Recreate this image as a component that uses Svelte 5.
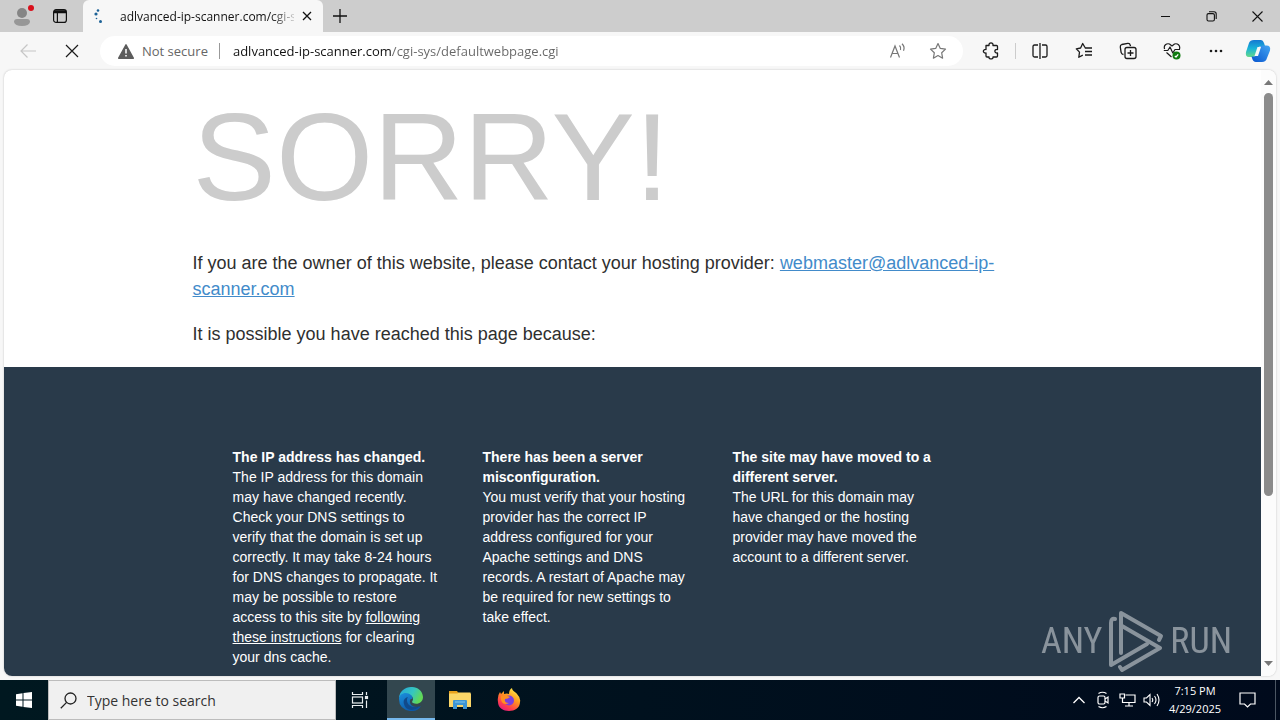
<script lang="ts">
	interface Reason {
		title: string;
		text: string;
		link?: string;
		after?: string;
	}

	const reasons: Reason[] = [
		{
			title: 'The IP address has changed.',
			text: 'The IP address for this domain may have changed recently. Check your DNS settings to verify that the domain is set up correctly. It may take 8-24 hours for DNS changes to propagate. It may be possible to restore access to this site by ',
			link: 'following these instructions',
			after: ' for clearing your dns cache.'
		},
		{
			title: 'There has been a server misconfiguration.',
			text: 'You must verify that your hosting provider has the correct IP address configured for your Apache settings and DNS records. A restart of Apache may be required for new settings to take effect.'
		},
		{
			title: 'The site may have moved to a different server.',
			text: 'The URL for this domain may have changed or the hosting provider may have moved the account to a different server.'
		}
	];

	let url = $state('adlvanced-ip-scanner.com/cgi-sys/defaultwebpage.cgi');
	let search = $state('');
</script>

<div class="screen">
	<header class="titlebar">
		<button class="profile" aria-label="Profile">
			<svg width="24" height="26" viewBox="0 0 24 26">
				<circle cx="12" cy="10" r="5" fill="#858585" />
				<path d="M4 19q0-3 3-3h10q3 0 3 3-1 4-8 4t-8-4z" fill="#979797" />
				<circle cx="21" cy="5" r="3" fill="#d9101c" />
			</svg>
		</button>
		<button class="spaces" aria-label="Tab actions">
			<svg width="16" height="16" viewBox="0 0 16 16" fill="none" stroke="#111" stroke-width="1.2">
				<rect x="1.6" y="1.6" width="12.8" height="12.8" rx="2.5" />
				<path d="M2 4.6h12M5.4 4.6V14" />
				<path d="M2 3.2h12" stroke-width="2" />
			</svg>
		</button>
		<div class="tab">
			<svg class="spinner" width="16" height="16" viewBox="0 0 16 16" fill="#1d6296">
				<circle cx="7" cy="2.500" r="1.300" />
				<circle cx="5" cy="6" r="1.600" />
				<circle cx="5.500" cy="10.500" r=".8" />
				<circle cx="9.500" cy="13.500" r="1.500" />
			</svg>
			<span class="tab-title">adlvanced-ip-scanner.com/cgi-s</span>
			<button class="tab-close" aria-label="Close tab">
				<svg width="10" height="10" viewBox="0 0 10 10" stroke="#111" stroke-width="1.3"><path d="M1 1l8 8M9 1l-8 8" /></svg>
			</button>
		</div>
		<button class="new-tab" aria-label="New tab">
			<svg width="14" height="14" viewBox="0 0 14 14" stroke="#111" stroke-width="1.3"><path d="M7 0v14M0 7h14" /></svg>
		</button>
		<div class="window-buttons">
			<button aria-label="Minimize">
				<svg width="11" height="11" viewBox="0 0 11 11" stroke="#111"><path d="M1 5.5h9" /></svg>
			</button>
			<button aria-label="Restore">
				<svg width="11" height="11" viewBox="0 0 11 11" fill="none" stroke="#111" stroke-width="1.1">
					<rect x="1" y="2.6" width="7.4" height="7.4" rx="1.5" />
					<path d="M3 .8h5q2.200 0 2.200 2.200v5" />
				</svg>
			</button>
			<button aria-label="Close">
				<svg width="11" height="11" viewBox="0 0 11 11" stroke="#111" stroke-width="1.1"><path d="M.5.5l10 10M10.5.5l-10 10" /></svg>
			</button>
		</div>
	</header>

	<nav class="toolbar">
		<button aria-label="Back" disabled>
			<svg width="18" height="16" viewBox="0 0 18 16" fill="none" stroke="#c6c6c6" stroke-width="1.2"><path d="M17 8H2M8.500 1.500L2 8l6.500 6.500" /></svg>
		</button>
		<button aria-label="Stop">
			<svg width="14" height="14" viewBox="0 0 14 14" stroke="#1b1b1b" stroke-width="1.2"><path d="M1 1l12 12M13 1L1 13" /></svg>
		</button>
		<div class="address">
			<button class="security">
				<svg width="16" height="15" viewBox="0 0 16 15">
					<path d="M8 .8l7.300 13.400H.7z" fill="#5c5c5c" stroke="#5c5c5c" stroke-width="1.400" stroke-linejoin="round" />
					<path d="M8 5v4.500M8 11v1.600" stroke="#fff" stroke-width="1.500" />
				</svg>
				Not secure
			</button>
			<input type="text" aria-label="Address" bind:value={url} spellcheck="false" />
			<button class="in-address" aria-label="Read aloud">
				<svg width="18" height="16" viewBox="0 0 18 16" fill="none" stroke="#777" stroke-width="1.2">
					<path d="M1.500 14.500L6 3l4.500 11.500M3 10.500h6M10.500 2.500q1.800 1.800 1 4.500M13 .8q3.200 3 1.500 7" />
				</svg>
			</button>
			<button class="in-address" aria-label="Add to favorites">
				<svg width="18" height="18" viewBox="0 0 18 18" fill="none" stroke="#777" stroke-width="1.2" stroke-linejoin="round">
					<path d="M9 1.500l2.300 4.900 5.200.7-3.800 3.700.9 5.400L9 13.600l-4.600 2.600.9-5.400L1.500 7.100l5.200-.7z" />
				</svg>
			</button>
		</div>
		<button aria-label="Extensions">
			<svg width="18" height="18" viewBox="0 0 18 18" fill="none" stroke="#1b1b1b" stroke-width="1.3" stroke-linejoin="round">
				<path d="M4 3.500h3C6.500 0 11.500 0 11 3.500h3.500q1 0 1 1v3c-3.500-.6-3.500 4 0 3.500v3q0 1-1 1H11c.5 2.600-4.500 2.600-4 0H5q-1 0-1-1V11C.5 11.500.5 7 4 7.500z" />
			</svg>
		</button>
		<span class="divider"></span>
		<button aria-label="Split screen">
			<svg width="18" height="16" viewBox="0 0 18 16" fill="none" stroke="#1b1b1b" stroke-width="1.3">
				<path d="M7 2H3.500Q2 2 2 3.500v9Q2 14 3.500 14H7M11 2h3.500Q16 2 16 3.500v9q0 1.500-1.500 1.500H11M9 0v16" />
			</svg>
		</button>
		<button aria-label="Favorites">
			<svg width="18" height="18" viewBox="0 0 18 18" fill="none" stroke="#1b1b1b" stroke-width="1.3" stroke-linejoin="round">
				<path d="M10 5.500L7.700 1.500 5.600 6 1.300 6.800l3.200 3.300-.7 5.200 4-2.200M9.800 6H17M10 9.500h7M10 13h7" />
			</svg>
		</button>
		<button aria-label="Collections">
			<svg width="18" height="18" viewBox="0 0 18 18" fill="none" stroke="#1b1b1b" stroke-width="1.3">
				<path d="M4.500 12.500q-2-.3-2.400-2.200L1.300 5q-.2-2 1.500-2.500l6-1.200q2-.2 2.400 1.700l.3 1.200" />
				<rect x="6" y="5.500" width="11" height="11" rx="2" />
				<path d="M11.500 8v6M8.500 11h6" />
			</svg>
		</button>
		<button aria-label="Browser essentials">
			<svg width="18" height="18" viewBox="0 0 18 18" fill="none" stroke="#1b1b1b" stroke-width="1.2" stroke-linejoin="round">
				<path d="M1.600 7C.3 3.500 3.500 1 6.500 2L9 4l2.500-2c3-1 6 1.500 5 5M3.500 10.500L8.500 15" />
				<path d="M.8 8.500h4L7 5l2.800 6L12 7.500h5" />
				<circle cx="13.500" cy="13.500" r="4" fill="#107c10" stroke="none" />
				<path d="M11.800 14l1.200 1 2.200-2.700" stroke="#fff" />
			</svg>
		</button>
		<button aria-label="Settings and more">
			<svg width="16" height="4" viewBox="0 0 16 4" fill="#1b1b1b"><circle cx="3" cy="2" r="1.300" /><circle cx="8" cy="2" r="1.300" /><circle cx="13" cy="2" r="1.300" /></svg>
		</button>
		<button class="copilot" aria-label="Copilot">
			<svg width="26" height="24" viewBox="0 0 26 24">
				<defs>
					<linearGradient id="cop-a" x1="0" y1="0" x2="0" y2="1">
						<stop offset="0" stop-color="#1478d2" /><stop offset=".5" stop-color="#19b3d8" /><stop offset="1" stop-color="#65d989" />
					</linearGradient>
					<linearGradient id="cop-b" x1="1" y1="0" x2="0" y2="1">
						<stop offset="0" stop-color="#43a5f2" /><stop offset="1" stop-color="#0754ce" />
					</linearGradient>
				</defs>
				<path d="M9 1h7q2 0 3 3l1 3h-4q-2 0-3 3l-1.500 5q-1 3-4 3H4q-4 0-3-5L4 4q1-3 5-3z" fill="url(#cop-a)" />
				<path d="M17 23h-6q-3 0-4-4l-.5-1.500H9q2 0 3-3l2-5q1-3 4-3h3.500q4.500 0 3.500 5L22 19q-1 4-5 4z" fill="url(#cop-b)" />
				<path d="M12.500 8h3.500l-3 9H9.500z" fill="#f7f7f7" />
			</svg>
		</button>
	</nav>

	<div class="viewport">
		<main class="page">
			<section class="intro">
				<h1>SORRY!</h1>
				<p>If you are the owner of this website, please contact your hosting provider: <a href="mailto:webmaster@adlvanced-ip-scanner.com">webmaster@adlvanced-ip-scanner.com</a></p>
				<p>It is possible you have reached this page because:</p>
			</section>
			<section class="reasons">
				<ul>
					{#each reasons as reason}
						<li>
							<strong>{reason.title}</strong><br />
							{reason.text}{#if reason.link}<a href="#dns">{reason.link}</a>{reason.after}{/if}
						</li>
					{/each}
				</ul>
			</section>
		</main>
		<div class="scrollbar">
			<svg width="9" height="6" viewBox="0 0 9 6" fill="#777"><path d="M4.500 0L9 5H0z" /></svg>
			<div class="track"><div class="thumb"></div></div>
			<svg width="9" height="6" viewBox="0 0 9 6" fill="#777"><path d="M4.500 6L9 1H0z" /></svg>
		</div>
	</div>

	<div class="watermark">
		<span>ANY</span>
		<svg width="56" height="62" viewBox="0 0 56 62" fill="none" stroke="#fff" stroke-width="4" stroke-linejoin="round" stroke-linecap="round">
			<path d="M13 43V3l40 23-2 4" />
			<path d="M7 9q-4-1-4 4v42l36-21" />
			<path d="M14 16l38 22-38 22-2-3" />
		</svg>
		<span>RUN</span>
	</div>

	<footer class="taskbar">
		<button class="start" aria-label="Start">
			<svg width="16" height="16" viewBox="0 0 16 16" fill="#fff"><path d="M0 2.200L6.500 1.300v6.200H0zM7.500 1.100L16 0v7.500H7.500zM0 8.500h6.500v6.200L0 13.800zM7.500 8.500H16V16l-8.500-1.100z" /></svg>
		</button>
		<label class="search">
			<svg width="17" height="17" viewBox="0 0 17 17" fill="none" stroke="#222" stroke-width="1.300"><circle cx="10.500" cy="6.500" r="5.500" /><path d="M6.600 10.400L.8 16.200" /></svg>
			<input type="text" placeholder="Type here to search" aria-label="Search" bind:value={search} />
		</label>
		<button class="task" aria-label="Task View">
			<svg width="18" height="16" viewBox="0 0 18 16" fill="none" stroke="#e8eef0" stroke-width="1.200">
				<path d="M1.500 0v2.500h10V0M1.500 16v-2.500h10V16M15.500 0v3M15.500 8.500V16" />
				<rect x="1.500" y="5" width="10" height="6" />
				<rect x="14.500" y="4.500" width="2" height="2" fill="#e8eef0" />
			</svg>
		</button>
		<button class="task open" aria-label="Microsoft Edge">
			<svg width="24" height="24" viewBox="0 0 24 24">
				<defs>
					<linearGradient id="edge-a" x1="0" y1="0" x2="1" y2=".4"><stop offset="0" stop-color="#25a4dc" /><stop offset=".6" stop-color="#35c6c0" /><stop offset="1" stop-color="#61d957" /></linearGradient>
					<linearGradient id="edge-b" x1="0" y1="0" x2=".6" y2="1"><stop offset="0" stop-color="#1b90de" /><stop offset="1" stop-color="#0c56a4" /></linearGradient>
				</defs>
				<path d="M0 11C1-3 23-4 24 10c0 6-6 8-10 6-2-1 0-2 0-4C14 7 4 5 0 11z" fill="url(#edge-a)" />
				<path d="M0 12c0-6 8-8 12-4 2 2 2 4 0 4-2 1-2 8 6 8q3 0 4-1-4 6-11 5Q0 22 0 12z" fill="url(#edge-b)" />
				<path d="M8 13c0 5 5 9 13 6-4 5-14 6-16-2-1-3 0-6 4-7q-1 1-1 3z" fill="#114a8b" />
			</svg>
		</button>
		<button class="task" aria-label="File Explorer">
			<svg width="22" height="20" viewBox="0 0 22 20">
				<path d="M0 1h8l2 3H0z" fill="#e9a21d" />
				<path d="M0 3.500h22V17H0z" fill="#fbd668" />
				<path d="M9 2.500h12.500V6H8z" fill="#fbd668" />
				<path d="M4 11q0-1 1-1h12q1 0 1 1v8h-4v-4H8v4H4z" fill="#3d95d4" />
				<path d="M6 12h10" stroke="#80c6ec" />
			</svg>
		</button>
		<button class="task" aria-label="Firefox">
			<svg width="24" height="24" viewBox="0 0 24 24">
				<defs>
					<linearGradient id="fox" x1=".8" y1="0" x2=".2" y2="1"><stop offset="0" stop-color="#fff44f" /><stop offset=".4" stop-color="#ff9a1f" /><stop offset=".75" stop-color="#ff3f4b" /><stop offset="1" stop-color="#e31587" /></linearGradient>
				</defs>
				<path d="M3 4l1 2 3-3v3q3-1 5 0c0-3 1-5 3-6 0 3 4 4 5 6q4 4 3 8c0 12-22 12-22 0Q0 8 3 4z" fill="url(#fox)" />
				<circle cx="12" cy="12.500" r="5" fill="#7a3fe0" />
				<path d="M4 8q4-2 9 1-2 2-5 2-1 4 4 4c-5 3-9-1-8-7z" fill="#ff9020" />
			</svg>
		</button>

		<div class="tray">
			<button aria-label="Show hidden icons">
				<svg width="12" height="8" viewBox="0 0 12 8" fill="none" stroke="#fff" stroke-width="1.300"><path d="M.5 7L6 1.500 11.500 7" /></svg>
			</button>
			<button aria-label="Meet now">
				<svg width="14" height="18" viewBox="0 0 14 18" fill="none" stroke="#fff" stroke-width="1.200">
					<rect x="2" y="5" width="7" height="8" rx="1.500" /><path d="M9 8l3-2v6l-3-2M2.500 2.500q4-2.500 8 0M2.500 15.500q4 2.500 8 0" />
				</svg>
			</button>
			<button aria-label="Network">
				<svg width="17" height="14" viewBox="0 0 17 14" fill="none" stroke="#fff" stroke-width="1.200">
					<path d="M6.500 2H16v7.500H3.500V6M10 9.500V13M6 13h8M1 1h4.500v4H1zM3.500 5v5" />
				</svg>
			</button>
			<button aria-label="Volume">
				<svg width="17" height="14" viewBox="0 0 17 14" fill="none" stroke="#fff" stroke-width="1.100">
					<path d="M1 5h2.500L7 1.500v11L3.500 9H1zM9 5q1.500 2 0 4M11.500 3q3 4 0 8M14 1q4 6 0 12" />
				</svg>
			</button>
			<button class="clock"><span>7:15 PM</span><span>4/29/2025</span></button>
			<button class="notifications" aria-label="Notifications">
				<svg width="17" height="16" viewBox="0 0 17 16" fill="none" stroke="#fff" stroke-width="1.200"><path d="M1 1h15v11h-4.500l-3 3-3-3H1z" /></svg>
			</button>
			<span class="desktop-edge"></span>
		</div>
	</footer>
</div>

<style>
	:global(body) {
		margin: 0;
	}

	.screen {
		position: relative;
		display: flex;
		flex-direction: column;
		height: 100vh;
		overflow: hidden;
		background: #f7f7f7;
		font-family: 'Open Sans', 'Noto Sans', sans-serif;
		font-size: 13px;
		color: #111;
	}

	button {
		display: flex;
		align-items: center;
		justify-content: center;
		padding: 0;
		border: 0;
		background: none;
		color: inherit;
		font: inherit;
	}

	svg {
		flex: none;
	}

	input {
		min-width: 0;
		padding: 0;
		border: 0;
		outline: 0;
		background: none;
		font: inherit;
	}

	.titlebar {
		display: flex;
		flex: none;
		height: 32px;
		background: #cdcdcd;
	}

	.profile {
		width: 44px;
	}

	.spaces {
		width: 32px;
	}

	.tab {
		display: flex;
		align-items: center;
		box-sizing: border-box;
		width: 240px;
		margin-left: 7px;
		padding: 0 9px 0 8px;
		border-radius: 6px 6px 0 0;
		background: #f7f7f7;
	}

	.tab-title {
		flex: 1;
		margin-left: 13px;
		overflow: hidden;
		font-size: 12px;
		white-space: nowrap;
		mask-image: linear-gradient(to right, #000 150px, transparent 180px);
	}

	.tab-close {
		width: 14px;
		height: 20px;
		margin-left: 6px;
	}

	.new-tab {
		width: 34px;
	}

	.window-buttons {
		display: flex;
		margin-left: auto;
	}

	.window-buttons button {
		width: 46px;
	}

	.toolbar {
		display: flex;
		flex: none;
		align-items: center;
		height: 38px;
		padding: 0 2px 0 6px;
	}

	.toolbar > button {
		width: 44px;
		height: 32px;
	}

	.toolbar > .copilot {
		width: 40px;
	}

	.address {
		display: flex;
		flex: 1;
		align-items: center;
		height: 30px;
		margin: 0 6px;
		padding: 0 5px 0 18px;
		border-radius: 16px;
		background: #fff;
	}

	.security {
		gap: 8px;
		padding-right: 11px;
		border-right: 1px solid #999;
		color: #666;
		line-height: 16px;
	}

	.address input {
		flex: 1;
		margin-left: 13px;
		background: linear-gradient(to right, #111 159px, #666 159px);
		background-clip: text;
		-webkit-text-fill-color: transparent;
	}

	.in-address {
		width: 40px;
	}

	.divider {
		width: 1px;
		height: 16px;
		margin: 0 2px;
		background: #ccc;
	}

	.viewport {
		display: flex;
		flex: 1;
		min-height: 0;
		margin: 0 4px 4px;
		overflow: hidden;
		border-radius: 8px;
		background: #fff;
		box-shadow: 0 0 2px #bbb;
	}

	.page {
		display: flex;
		flex: 1;
		flex-direction: column;
		overflow: hidden;
		font-family: 'Liberation Sans', Arial, sans-serif;
		font-size: 14px;
		line-height: 20px;
	}

	.intro {
		width: 70%;
		margin: 0 auto;
		padding: 16px 0 20px;
		color: #2f2f2f;
		font-size: 18px;
		line-height: 26px;
	}

	h1 {
		margin: 0 0 22px;
		color: #ccc;
		font-size: 125px;
		font-weight: 400;
		line-height: 142px;
	}

	.intro p {
		margin: 19px 0 0;
	}

	.intro a {
		color: #428bca;
	}

	.reasons {
		flex: 1;
		background: #293a4a;
		color: #fff;
	}

	.reasons ul {
		display: grid;
		grid-template-columns: repeat(3, 1fr);
		box-sizing: border-box;
		width: 70%;
		margin: 0 auto;
		padding: 80px 90px 0 40px;
		list-style: none;
	}

	.reasons li {
		padding-right: 42px;
	}

	.reasons a {
		color: inherit;
	}

	.scrollbar {
		display: flex;
		flex-direction: column;
		align-items: center;
		width: 15px;
		padding: 10px 0;
		background: #fcfcfc;
	}

	.track {
		flex: 1;
		width: 9px;
		margin: 7px 0;
	}

	.thumb {
		height: 72%;
		border-radius: 5px;
		background: #8b8b8b;
	}

	.watermark {
		position: absolute;
		right: 48px;
		bottom: 48px;
		display: flex;
		align-items: center;
		gap: 6px;
		color: #fff;
		font-family: 'Roboto Condensed', 'Liberation Sans Narrow', 'Liberation Sans', sans-serif;
		font-size: 36px;
		opacity: 0.45;
	}

	.taskbar {
		display: flex;
		flex: none;
		height: 40px;
		background: linear-gradient(to right, #001820, #000a1c);
		color: #fff;
	}

	.start {
		width: 48px;
	}

	.search {
		display: flex;
		align-items: center;
		box-sizing: border-box;
		width: 288px;
		padding-left: 11px;
		border: 1px solid #bcbcbc;
		background: #f0f0f0;
	}

	.search input {
		flex: 1;
		margin-left: 10px;
		font-size: 14px;
	}

	.search input::placeholder {
		color: #333;
	}

	.task {
		width: 48px;
		margin-right: 1px;
	}

	.open {
		margin-left: 2px;
		border-bottom: 2px solid #76b9ed;
		background: #33474f;
	}

	.tray {
		display: flex;
		margin-left: auto;
	}

	.tray button {
		width: 24px;
	}

	.tray .clock {
		flex-direction: column;
		width: 64px;
		font-size: 11px;
		line-height: 18px;
	}

	.tray .notifications {
		width: 40px;
	}

	.desktop-edge {
		width: 4px;
		margin-left: 8px;
		border-left: 1px solid #4b5663;
	}
</style>
